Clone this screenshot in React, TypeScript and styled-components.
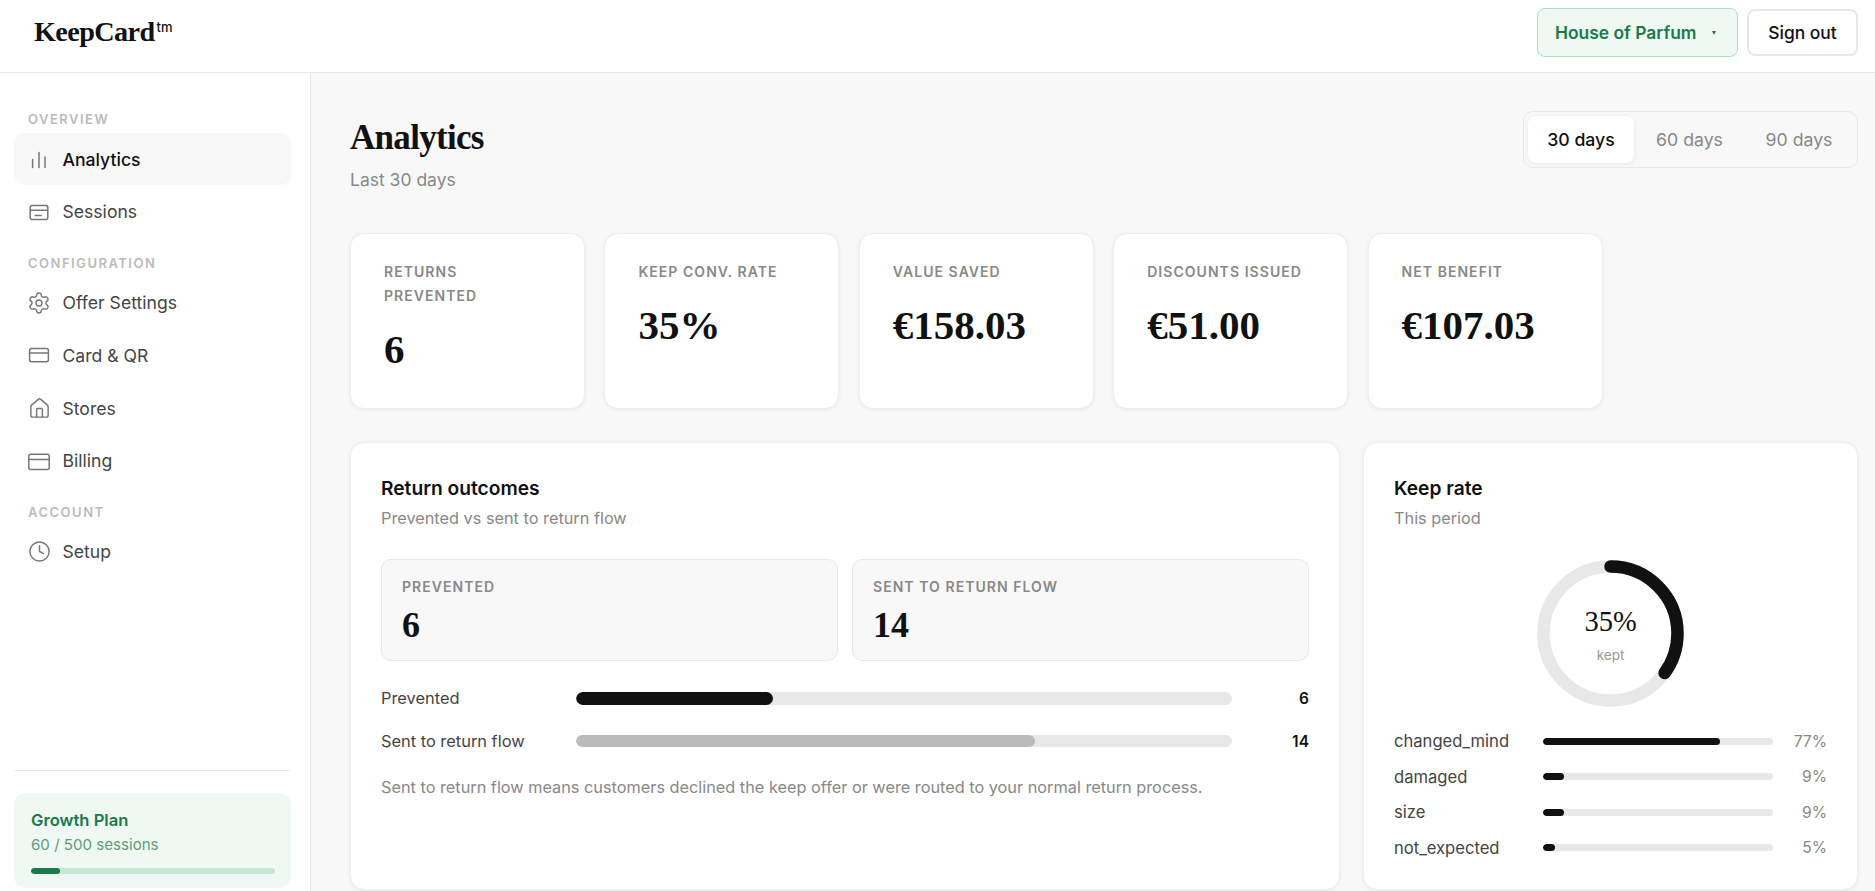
import React from "react";
import styled, { createGlobalStyle } from "styled-components";
import { Settings, House, Clock } from "lucide-react";

const sans = `"Inter", "Liberation Sans", sans-serif`;
const serif = `"Liberation Serif", "Times New Roman", serif`;

const GlobalStyle = createGlobalStyle`
  * { box-sizing: border-box; }
  html, body { margin: 0; padding: 0; height: 100%; overflow: hidden; }
  body { font-family: ${sans}; color: #111; background: #f8f8f8; }
`;

const Page = styled.div`
  height: 100vh;
  display: flex;
  flex-direction: column;
`;

const TopBar = styled.header`
  height: 73px;
  flex: none;
  background: #fff;
  border-bottom: 1px solid #e8e8e8;
  display: flex;
  align-items: center;
  justify-content: space-between;
  padding: 0 17px 0 34px;
`;

const Logo = styled.div`
  font-family: ${serif};
  font-weight: 700;
  font-size: 28.2px;
  letter-spacing: -0.6px;
  margin-top: -8px;
  color: #111;

  sup {
    font-family: ${sans};
    font-weight: 500;
    font-size: 13px;
    letter-spacing: 0;
    margin-left: 2px;
    vertical-align: 9px;
    line-height: 0;
  }
`;

const TopActions = styled.div`
  display: flex;
  align-items: center;
  gap: 9px;
  margin-top: -7px;
`;

const StoreSelect = styled.button`
  width: 201px;
  height: 49px;
  border: 1px solid #a8dfc0;
  border-radius: 8px;
  background: #eff8f3;
  color: #1a7a4a;
  font-family: ${sans};
  font-size: 17.4px;
  font-weight: 600;
  display: flex;
  align-items: center;
  padding: 0 0 0 17px;
`;

const Caret = styled.span`
  margin-left: 15px;
  width: 0;
  height: 0;
  border-left: 2.5px solid transparent;
  border-right: 2.5px solid transparent;
  border-top: 4px solid #1a7a4a;
`;

const SignOut = styled.button`
  width: 111px;
  height: 47px;
  border: 2px solid #e8e8e8;
  border-radius: 8px;
  background: #fff;
  color: #111;
  font-family: ${sans};
  font-size: 17.4px;
  font-weight: 500;
`;

const Body = styled.div`
  flex: 1;
  display: flex;
  min-height: 0;
`;

const Sidebar = styled.aside`
  width: 311px;
  flex: none;
  background: #fff;
  border-right: 1px solid #e8e8e8;
  padding: 38px 19px 3px 14px;
  display: flex;
  flex-direction: column;
`;

const NavLabel = styled.div<{ $first?: boolean }>`
  font-size: 13px;
  line-height: 16px;
  font-weight: 600;
  letter-spacing: 1.5px;
  color: #bbb;
  padding-left: 14px;
  margin-top: ${(p) => (p.$first ? 0 : 17.5)}px;
  margin-bottom: ${(p) => (p.$first ? 6 : 5.5)}px;
`;

const NavList = styled.nav`
  display: flex;
  flex-direction: column;
  gap: 0.7px;
`;

const NavItem = styled.a<{ $active?: boolean }>`
  height: 52px;
  display: flex;
  align-items: center;
  gap: 12.5px;
  padding-left: 14px;
  border-radius: 10px;
  font-size: 17.6px;
  font-weight: ${(p) => (p.$active ? 500 : 400)};
  color: ${(p) => (p.$active ? "#111" : "#444")};
  background: ${(p) => (p.$active ? "#f8f8f8" : "transparent")};
`;

const IconBox = styled.span`
  width: 22px;
  height: 22px;
  flex: none;
  display: flex;
  align-items: center;
  justify-content: center;
  color: #777;

  svg {
    flex: none;
    display: block;
  }
`;

const DrawnIcon = styled.svg.attrs({
  width: 22,
  height: 22,
  viewBox: "0 0 22 22",
  fill: "none",
  stroke: "currentColor",
  strokeWidth: 1.5,
  strokeLinecap: "round",
  strokeLinejoin: "round",
})``;

const AnalyticsIcon = () => (
  <DrawnIcon>
    <path d="M4.6 19.4v-7.8M11 19.4V4.4M17 19.4V9" />
  </DrawnIcon>
);

const SessionsIcon = () => (
  <DrawnIcon>
    <rect x="2.2" y="4.6" width="17.6" height="14" rx="2" />
    <path d="M2.2 9.2h17.6M7.2 14.5h6" />
  </DrawnIcon>
);

const CardIcon = () => (
  <DrawnIcon>
    <rect x="1.6" y="4.4" width="18.8" height="13.4" rx="2" />
    <path d="M1.6 9h18.8" />
  </DrawnIcon>
);

const BillingIcon = () => (
  <DrawnIcon>
    <rect x="0.8" y="4.2" width="20.4" height="15.2" rx="2" />
    <path d="M0.8 9.6h20.4" />
  </DrawnIcon>
);

const PlanBlock = styled.div`
  margin-top: auto;
  border-top: 1px solid #e8e8e8;
  padding-top: 22px;
`;

const PlanCard = styled.div`
  height: 95px;
  border-radius: 12px;
  background: #eff8f3;
  padding: 16.5px 16px 0 17px;
`;

const PlanName = styled.div`
  font-size: 16.6px;
  line-height: 20px;
  font-weight: 600;
  color: #1a7a4a;
`;

const PlanUsage = styled.div`
  margin-top: 5.5px;
  font-size: 15.1px;
  line-height: 20px;
  color: #5f9d7c;
`;

const PlanTrack = styled.div`
  margin-top: 13px;
  height: 6px;
  border-radius: 3px;
  background: #c9e6d5;
  overflow: hidden;
`;

const PlanFill = styled.div`
  height: 100%;
  border-radius: 3px;
  background: #1a7a4a;
`;

const Main = styled.main`
  flex: 1;
  min-width: 0;
  padding: 38px 17px 0 39px;
  overflow: hidden;
`;

const PageHead = styled.div`
  display: flex;
  justify-content: space-between;
  align-items: flex-start;
  height: 80px;
  margin-bottom: 42px;
`;

const Title = styled.h1`
  margin: 6px 0 0;
  font-family: ${serif};
  font-weight: 700;
  font-size: 35px;
  line-height: 42px;
  letter-spacing: -0.7px;
  color: #111;
`;

const Subtitle = styled.div`
  margin-top: 10px;
  font-size: 17.5px;
  line-height: 22px;
  color: #888;
`;

const RangeTabs = styled.div`
  width: 335px;
  height: 57px;
  padding: 4px;
  border: 1px solid #e8e8e8;
  border-radius: 10px;
  display: grid;
  grid-template-columns: 106px 111px 1fr;
`;

const RangeTab = styled.div<{ $active?: boolean }>`
  display: flex;
  align-items: center;
  justify-content: center;
  border-radius: 8px;
  font-size: 17.7px;
  font-weight: ${(p) => (p.$active ? 500 : 400)};
  color: ${(p) => (p.$active ? "#111" : "#888")};
  background: ${(p) => (p.$active ? "#fff" : "transparent")};
  box-shadow: ${(p) => (p.$active ? "0 1px 4px rgba(0,0,0,.07)" : "none")};
`;

const StatGrid = styled.div`
  display: grid;
  grid-template-columns: repeat(5, 235px);
  gap: 19.4px;
  margin-bottom: 33.5px;
`;

const StatCard = styled.div`
  height: 175.5px;
  background: #fff;
  border: 1px solid #eee;
  border-radius: 14px;
  box-shadow: 0 1px 4px rgba(0, 0, 0, 0.06);
  padding: 26px 33px 0;
`;

const StatLabel = styled.div`
  font-size: 14px;
  line-height: 24px;
  font-weight: 600;
  letter-spacing: 1.05px;
  color: #888;
`;

const StatValue = styled.div`
  margin-top: 17px;
  font-family: ${serif};
  font-weight: 700;
  font-size: 41px;
  line-height: 48px;
  color: #111;
`;

const PanelGrid = styled.div`
  display: grid;
  grid-template-columns: minmax(0, 2fr) minmax(0, 1fr);
  gap: 23px;
`;

const Panel = styled.section`
  background: #fff;
  border: 1px solid #eee;
  border-radius: 14px;
  box-shadow: 0 1px 4px rgba(0, 0, 0, 0.06);
  padding: 33px 30px 30px;
`;

const PanelTitle = styled.h2`
  margin: 0;
  font-size: 19.2px;
  line-height: 24px;
  font-weight: 600;
  color: #111;
`;

const PanelSub = styled.div`
  margin-top: 7px;
  font-size: 16.3px;
  line-height: 22px;
  color: #888;
`;

const OutcomeGrid = styled.div`
  display: grid;
  grid-template-columns: 1fr 1fr;
  gap: 14px;
  margin-top: 30px;
`;

const OutcomeBox = styled.div`
  height: 102px;
  background: #f8f8f8;
  border: 1px solid #e8e8e8;
  border-radius: 10px;
  padding: 17px 20px 0;
`;

const OutcomeLabel = styled.div`
  font-size: 14px;
  line-height: 20px;
  font-weight: 600;
  letter-spacing: 1.05px;
  color: #888;
`;

const OutcomeValue = styled.div`
  margin-top: 8px;
  font-family: ${serif};
  font-weight: 700;
  font-size: 36px;
  line-height: 40px;
  color: #111;
`;

const CompareList = styled.div`
  margin-top: 26px;
  display: flex;
  flex-direction: column;
  gap: 21px;
`;

const CompareRow = styled.div`
  display: grid;
  grid-template-columns: 195px 656px 77px;
  align-items: center;
  height: 22px;
  font-size: 16.4px;
  color: #444;
`;

const Track = styled.div<{ $h: number }>`
  height: ${(p) => p.$h}px;
  border-radius: ${(p) => p.$h / 2}px;
  background: #e8e8e8;
  overflow: hidden;
`;

const Fill = styled.div<{ $color: string }>`
  height: 100%;
  border-radius: inherit;
  background: ${(p) => p.$color};
`;

const CompareCount = styled.div`
  text-align: right;
  font-size: 15.5px;
  font-weight: 600;
  color: #111;
`;

const Note = styled.p`
  margin: 24px 0 0;
  font-size: 16.3px;
  line-height: 22px;
  color: #888;
`;

const RingWrap = styled.div`
  position: relative;
  width: 147px;
  height: 147px;
  margin: 31px auto 0;
`;

const RingText = styled.div`
  position: absolute;
  inset: 0;
  display: flex;
  flex-direction: column;
  align-items: center;
  justify-content: center;
  padding-top: 3px;
`;

const RingValue = styled.div`
  font-family: ${serif};
  font-size: 28.5px;
  line-height: 34px;
  color: #111;
`;

const RingCaption = styled.div`
  margin-top: 6px;
  font-size: 13.5px;
  line-height: 20px;
  color: #999;
`;

const ReasonList = styled.div`
  margin-top: 23px;
  display: flex;
  flex-direction: column;
  gap: 13.6px;
`;

const ReasonRow = styled.div`
  display: grid;
  grid-template-columns: 149px 230px 1fr;
  align-items: center;
  height: 22px;
  font-size: 16.6px;
  color: #444;
`;

const ReasonPct = styled.div`
  text-align: right;
  font-size: 15.6px;
  color: #888;
`;

const stats = [
  { label: "RETURNS PREVENTED", value: "6" },
  { label: "KEEP CONV. RATE", value: "35%" },
  { label: "VALUE SAVED", value: "€158.03" },
  { label: "DISCOUNTS ISSUED", value: "€51.00" },
  { label: "NET BENEFIT", value: "€107.03" },
];

const reasons = [
  { name: "changed_mind", pct: 77 },
  { name: "damaged", pct: 9 },
  { name: "size", pct: 9 },
  { name: "not_expected", pct: 5 },
];

const App = () => {
  const radius = 67;
  const circumference = 2 * Math.PI * radius;

  return (
    <>
      <GlobalStyle />
      <Page>
        <TopBar>
          <Logo>
            KeepCard<sup>tm</sup>
          </Logo>
          <TopActions>
            <StoreSelect>
              House of Parfum
              <Caret />
            </StoreSelect>
            <SignOut>Sign out</SignOut>
          </TopActions>
        </TopBar>
        <Body>
          <Sidebar>
            <NavLabel $first>OVERVIEW</NavLabel>
            <NavList>
              <NavItem $active>
                <IconBox>
                  <AnalyticsIcon />
                </IconBox>
                Analytics
              </NavItem>
              <NavItem>
                <IconBox>
                  <SessionsIcon />
                </IconBox>
                Sessions
              </NavItem>
            </NavList>
            <NavLabel>CONFIGURATION</NavLabel>
            <NavList>
              <NavItem>
                <IconBox>
                  <Settings size={24} strokeWidth={1.4} />
                </IconBox>
                Offer Settings
              </NavItem>
              <NavItem>
                <IconBox>
                  <CardIcon />
                </IconBox>
                Card &amp; QR
              </NavItem>
              <NavItem>
                <IconBox>
                  <House size={23} strokeWidth={1.5} />
                </IconBox>
                Stores
              </NavItem>
              <NavItem>
                <IconBox>
                  <BillingIcon />
                </IconBox>
                Billing
              </NavItem>
            </NavList>
            <NavLabel>ACCOUNT</NavLabel>
            <NavList>
              <NavItem>
                <IconBox>
                  <Clock size={23} strokeWidth={1.5} />
                </IconBox>
                Setup
              </NavItem>
            </NavList>
            <PlanBlock>
              <PlanCard>
                <PlanName>Growth Plan</PlanName>
                <PlanUsage>60 / 500 sessions</PlanUsage>
                <PlanTrack>
                  <PlanFill style={{ width: `${(60 / 500) * 100}%` }} />
                </PlanTrack>
              </PlanCard>
            </PlanBlock>
          </Sidebar>
          <Main>
            <PageHead>
              <div>
                <Title>Analytics</Title>
                <Subtitle>Last 30 days</Subtitle>
              </div>
              <RangeTabs>
                <RangeTab $active>30 days</RangeTab>
                <RangeTab>60 days</RangeTab>
                <RangeTab>90 days</RangeTab>
              </RangeTabs>
            </PageHead>
            <StatGrid>
              {stats.map((s) => (
                <StatCard key={s.label}>
                  <StatLabel>{s.label}</StatLabel>
                  <StatValue>{s.value}</StatValue>
                </StatCard>
              ))}
            </StatGrid>
            <PanelGrid>
              <Panel>
                <PanelTitle>Return outcomes</PanelTitle>
                <PanelSub>Prevented vs sent to return flow</PanelSub>
                <OutcomeGrid>
                  <OutcomeBox>
                    <OutcomeLabel>PREVENTED</OutcomeLabel>
                    <OutcomeValue>6</OutcomeValue>
                  </OutcomeBox>
                  <OutcomeBox>
                    <OutcomeLabel>SENT TO RETURN FLOW</OutcomeLabel>
                    <OutcomeValue>14</OutcomeValue>
                  </OutcomeBox>
                </OutcomeGrid>
                <CompareList>
                  <CompareRow>
                    Prevented
                    <Track $h={13}>
                      <Fill $color="#111" style={{ width: "30%" }} />
                    </Track>
                    <CompareCount>6</CompareCount>
                  </CompareRow>
                  <CompareRow>
                    Sent to return flow
                    <Track $h={12}>
                      <Fill $color="#bbb" style={{ width: "70%" }} />
                    </Track>
                    <CompareCount>14</CompareCount>
                  </CompareRow>
                </CompareList>
                <Note>
                  Sent to return flow means customers declined the keep offer or were routed to your
                  normal return process.
                </Note>
              </Panel>
              <Panel>
                <PanelTitle>Keep rate</PanelTitle>
                <PanelSub>This period</PanelSub>
                <RingWrap>
                  <svg width="147" height="147" viewBox="0 0 147 147">
                    <circle cx="73.5" cy="73.5" r={radius} fill="none" stroke="#e8e8e8" strokeWidth="12.5" />
                    <circle
                      cx="73.5"
                      cy="73.5"
                      r={radius}
                      fill="none"
                      stroke="#111"
                      strokeWidth="12.5"
                      strokeLinecap="round"
                      strokeDasharray={`${circumference * 0.35} ${circumference}`}
                      transform="rotate(-90 73.5 73.5)"
                    />
                  </svg>
                  <RingText>
                    <RingValue>35%</RingValue>
                    <RingCaption>kept</RingCaption>
                  </RingText>
                </RingWrap>
                <ReasonList>
                  {reasons.map((r) => (
                    <ReasonRow key={r.name}>
                      {r.name}
                      <Track $h={7}>
                        <Fill $color="#111" style={{ width: `${r.pct}%` }} />
                      </Track>
                      <ReasonPct>{r.pct}%</ReasonPct>
                    </ReasonRow>
                  ))}
                </ReasonList>
              </Panel>
            </PanelGrid>
          </Main>
        </Body>
      </Page>
    </>
  );
};

export default App;
